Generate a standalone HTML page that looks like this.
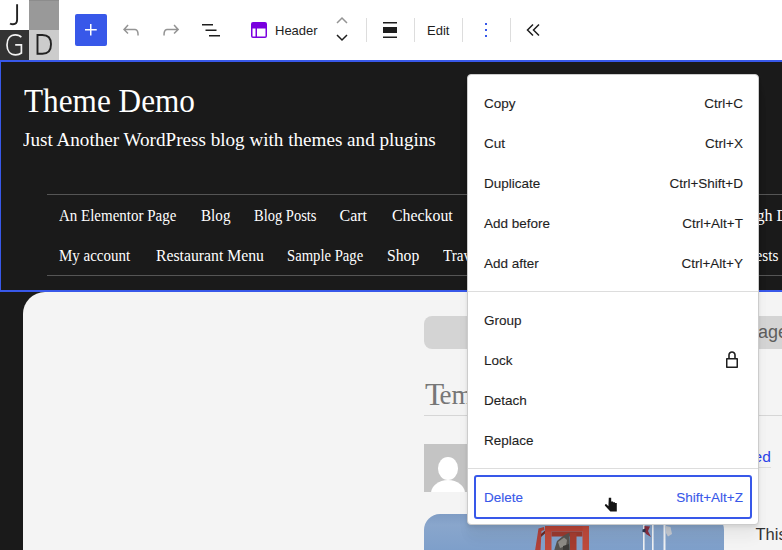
<!DOCTYPE html>
<html><head><meta charset="utf-8">
<style>
*{margin:0;padding:0;box-sizing:border-box}
html,body{width:782px;height:550px;overflow:hidden;background:#fff;position:relative;font-family:"Liberation Sans",sans-serif}
.a{position:absolute}
svg{position:absolute;display:block}
.tb{left:0;top:0;width:782px;height:60px;background:#fff}
.sep{position:absolute;top:18px;width:1px;height:24px;background:#ddd}
.ui{position:absolute;font-size:13px;color:#1e1e1e;white-space:nowrap;line-height:1}
.hdr{left:0;top:60px;width:782px;height:232px;background:#1a1a1a;border-top:2px solid #3858e9;border-bottom:2px solid #3858e9;border-left:1px solid #3858e9}
.serif{position:absolute;font-family:"Liberation Serif",serif;color:#fff;white-space:nowrap;line-height:1;transform-origin:0 0}
.nav{font-size:16px}
.card{left:23px;top:292px;width:800px;height:300px;background:#f4f4f4;border-top-left-radius:22px}
.menu{left:467px;top:74px;width:292px;height:451px;background:#fff;border:1px solid #ccc;border-radius:4px;box-shadow:0 2px 3px rgba(0,0,0,.05),0 4px 5px rgba(0,0,0,.04),0 12px 12px rgba(0,0,0,.03),0 16px 16px rgba(0,0,0,.02)}
.mi{position:absolute;font-size:13.5px;color:#1e1e1e;white-space:nowrap;line-height:1;-webkit-text-stroke:0.1px currentColor}
.sc{text-align:right}
</style></head><body>
<!-- toolbar -->
<div class="a tb"></div>
<div class="a" style="left:0;top:0;width:29px;height:30px;background:#fff"></div>
<div class="a" style="left:29px;top:0;width:30px;height:30px;background:#999;border-top:1px solid #8c8c8c"></div>
<div class="a" style="left:0;top:30px;width:29px;height:30px;background:#333"></div>
<div class="a" style="left:29px;top:30px;width:30px;height:30px;background:#ccc"></div>
<svg style="left:0;top:0" width="59" height="60" viewBox="0 0 59 60">
<path d="M17.1 4.2V19.8c0 2.9-1.6 4.5-4.1 4.5-1.1 0-2.1-.3-2.9-.9" stroke="#222" stroke-width="1.9" fill="none"/>
<path d="M21.3 37.3C20 35.6 18 34.8 15.4 34.8 10.2 34.8 7 38.9 7 44.9 7 51 10.4 54.8 15.6 54.8 18 54.8 19.9 54.2 21.4 53V44.9H15.2" stroke="#f2f2f2" stroke-width="1.7" fill="none"/>
<path d="M37.5 35V53.8H42.4C48.2 53.8 51 49.9 51 44.3 51 38.6 48.2 35 42.4 35Z" stroke="#222" stroke-width="1.9" fill="none"/>
</svg>

<div class="a" style="left:75px;top:14px;width:32px;height:32px;background:#3858e9;border-radius:2px"></div>
<svg style="left:75px;top:14px" width="32" height="32" viewBox="75 14 32 32"><path d="M90 24h1.5v4.95h5.25v1.5H91.5v5.05H90v-5.05h-5v-1.5h5z" fill="#fff"/></svg>
<svg style="left:119px;top:18px" width="24" height="24" viewBox="0 0 24 24"><path d="M18.3 11.7c-.6-.6-1.4-.9-2.3-.9H6.7l2.9-3.3-1.1-1-4.5 5L8.5 16l1-1-2.7-2.7H16c.5 0 .9.2 1.3.5 1 1 1 3.4 1 4.5v.3h1.5v-.2c0-1.5 0-4.3-1.5-5.7z" fill="#949494"/></svg>
<svg style="left:159px;top:18px" width="24" height="24" viewBox="0 0 24 24"><path d="M15.6 6.5l-1.1 1 2.9 3.3H8c-.9 0-1.7.3-2.3.9-1.4 1.5-1.4 4.2-1.4 5.6v.2h1.5v-.3c0-1.1 0-3.5 1-4.5.3-.3.7-.5 1.3-.5h9.2L14.5 15l1.1 1.1 4.6-4.6-4.6-5z" fill="#949494"/></svg>
<svg style="left:199px;top:18px" width="24" height="24" viewBox="0 0 24 24"><path d="M3 6h11v1.5H3V6Zm3.5 5.5h11V13h-11v-1.5ZM21 17H10v1.5h11V17Z" fill="#1e1e1e"/></svg>
<svg style="left:247px;top:18px" width="24" height="24" viewBox="0 0 24 24"><path d="M18.5 10.5H10v8h8a.5.5 0 00.5-.5v-7.5zm-10 0h-3V18a.5.5 0 00.5.5h2.5v-8zM6 4h12a2 2 0 012 2v12a2 2 0 01-2 2H6a2 2 0 01-2-2V6a2 2 0 012-2z" fill="#7a00df"/></svg>
<div class="ui" style="left:275px;top:24px">Header</div>
<svg style="left:330px;top:12px" width="24" height="16" viewBox="0 0 24 16"><path d="M7 11l5-5 5 5" fill="none" stroke="#949494" stroke-width="1.5"/></svg>
<svg style="left:330px;top:32px" width="24" height="16" viewBox="0 0 24 16"><path d="M7 3l5 5 5-5" fill="none" stroke="#1e1e1e" stroke-width="1.5"/></svg>
<div class="sep" style="left:366px"></div>
<svg style="left:378px;top:18px" width="24" height="24" viewBox="0 0 24 24"><path d="M5 4h14v1.5H5zM5 9h14v6H5zM5 18.5h14V20H5z" fill="#1e1e1e"/></svg>
<div class="sep" style="left:414px"></div>
<div class="ui" style="left:427px;top:24px">Edit</div>
<div class="sep" style="left:462px"></div>
<div class="a" style="left:485px;top:23px;width:2px;height:2px;background:#3858e9"></div>
<div class="a" style="left:485px;top:29px;width:2px;height:2px;background:#3858e9"></div>
<div class="a" style="left:485px;top:35px;width:2px;height:2px;background:#3858e9"></div>
<div class="sep" style="left:510px"></div>
<svg style="left:521px;top:18px" width="24" height="24" viewBox="0 0 24 24"><path d="M12 6.5L6.5 12l5.5 5.5M18 6.5L12.5 12l5.5 5.5" fill="none" stroke="#1e1e1e" stroke-width="1.5"/></svg>

<!-- header block -->
<div class="a" style="left:0;top:60px;width:782px;height:490px;background:#1a1a1a"></div>
<div class="a hdr"></div>
<div class="serif" style="left:24px;top:83.6px;font-size:34px;transform:scaleX(0.919)">Theme Demo</div>
<div class="serif" style="left:23px;top:130.3px;font-size:19px;transform:scaleX(1.006)">Just Another WordPress blog with themes and plugins</div>
<div class="a" style="left:47px;top:194px;width:740px;height:1px;background:#555"></div>
<div class="a" style="left:47px;top:275px;width:740px;height:1px;background:#555"></div>
<div class="serif nav" style="left:59px;top:207.8px;transform:scaleX(0.936)">An Elementor Page</div>
<div class="serif nav" style="left:200.5px;top:207.8px;transform:scaleX(0.947)">Blog</div>
<div class="serif nav" style="left:253.5px;top:207.8px;transform:scaleX(0.907)">Blog Posts</div>
<div class="serif nav" style="left:339.5px;top:207.8px">Cart</div>
<div class="serif nav" style="left:391.5px;top:207.8px;transform:scaleX(0.99)">Checkout</div>
<div class="serif nav" style="left:59px;top:247.8px;transform:scaleX(0.935)">My account</div>
<div class="serif nav" style="left:155.8px;top:247.8px;transform:scaleX(0.983)">Restaurant Menu</div>
<div class="serif nav" style="left:287px;top:247.8px;transform:scaleX(0.917)">Sample Page</div>
<div class="serif nav" style="left:386.8px;top:247.8px;transform:scaleX(0.98)">Shop</div>
<div class="serif nav" style="left:442.5px;top:247.8px;transform:scaleX(0.95)">Travel</div>
<div class="serif nav" style="left:756.5px;top:207.8px">gh Demand</div>
<div class="serif nav" style="left:737px;top:247.8px;transform:scaleX(0.95)">Guests</div>

<!-- content card -->
<div class="a card"></div>
<div class="a" style="left:424px;top:316px;width:420px;height:33px;background:#d4d4d4;border-radius:8px"></div>
<div class="ui" style="left:746px;top:322.8px;font-size:18px;color:#5e5e5e">Page</div>
<div class="serif" style="left:425px;top:378.8px;font-size:31.5px;color:#777">T</div><div class="serif" style="left:439.6px;top:382.2px;font-size:27px;color:#777">emplate</div>
<div class="a" style="left:424px;top:415px;width:400px;height:1px;background:#d6d6d6"></div>
<div class="a" style="left:424px;top:444px;width:48px;height:48px;background:#c4c4c4;overflow:hidden">
 <div class="a" style="left:14px;top:13px;width:20px;height:22.5px;border-radius:50%;background:#fff"></div>
 <div class="a" style="left:7px;top:35.5px;width:34px;height:30px;border-radius:50% 50% 0 0/45% 45% 0 0;background:#fff"></div>
</div>
<div class="ui" style="left:745px;top:448.5px;font-size:15.5px;color:#2b43e8">ned</div>
<div class="a" style="left:740px;top:467px;width:31px;height:1px;background:#ddd"></div>
<div class="a" style="left:424px;top:514px;width:300px;height:40px;border-top-left-radius:16px;border-top-right-radius:16px;overflow:hidden;background:linear-gradient(180deg,#7f9cc4 0px,#89a6cc 11px,#7e9fca 36px,#7c9ec9 40px)">
<svg style="left:0;top:0" width="300" height="40" viewBox="0 0 300 40">
<g transform="translate(-424,-514)">
<path d="M535 551 L538.5 528.5 L544 527 L544.5 530 L541.5 531 L540.5 551z" fill="#b0423a"/>
<path d="M541 534 L545 530.5 L545 533.5 L541 537z" fill="#6e2a24"/>
<rect x="545" y="526" width="6.5" height="30" fill="#bd4a3c"/>
<rect x="545" y="526" width="44" height="5.5" fill="#b94538"/>
<rect x="551.5" y="531.5" width="31" height="5" fill="#9a3a2f"/>
<rect x="570" y="533" width="6.5" height="20" fill="#a53d31"/>
<rect x="582.5" y="526" width="6.5" height="30" fill="#bd4a3c"/>
<path d="M554 551 L557 541 L563 536 L569.5 532.5 L570 551z" fill="#55534f"/>
<path d="M558 542 L564 537.5 L567 540 L566 546 L560 548z" fill="#8e8c86"/>
<path d="M563 546 L569 544 L569 551 L563 551z" fill="#3c3b38"/>
<rect x="643" y="524" width="1.6" height="30" fill="#eef0f3"/>
<rect x="652" y="524" width="1.6" height="30" fill="#eef0f3"/>
<rect x="663.5" y="524" width="2" height="30" fill="#eef0f3"/>
<path d="M644.5 526 L650 526.5 L648 531 L651 537 L646 534 L644.5 531z" fill="#8b2e3e"/>
<path d="M642.5 529.5 L645.5 528.5 L645.5 532.5 L642.5 532z" fill="#2c3550"/>
<path d="M666 526 L670.5 527 L672 534 L668 536.5 L666 533z" fill="#c4c9d1"/>
</g>
</svg>
</div>
<div class="ui" style="left:755.5px;top:525.8px;font-size:16.5px;color:#333">This</div>

<!-- menu -->
<div class="a menu"></div>
<div class="mi" style="left:484px;top:96.8px">Copy</div><div class="mi sc" style="left:600px;width:143px;top:96.8px">Ctrl+C</div>
<div class="mi" style="left:484px;top:136.8px">Cut</div><div class="mi sc" style="left:600px;width:143px;top:136.8px">Ctrl+X</div>
<div class="mi" style="left:484px;top:176.8px">Duplicate</div><div class="mi sc" style="left:600px;width:143px;top:176.8px">Ctrl+Shift+D</div>
<div class="mi" style="left:484px;top:216.8px">Add before</div><div class="mi sc" style="left:600px;width:143px;top:216.8px">Ctrl+Alt+T</div>
<div class="mi" style="left:484px;top:256.8px">Add after</div><div class="mi sc" style="left:600px;width:143px;top:256.8px">Ctrl+Alt+Y</div>
<div class="a" style="left:468px;top:291px;width:290px;height:1px;background:#ddd"></div>
<div class="mi" style="left:484px;top:313.8px">Group</div>
<div class="mi" style="left:484px;top:353.8px">Lock</div>
<div class="mi" style="left:484px;top:393.8px">Detach</div>
<div class="mi" style="left:484px;top:433.8px">Replace</div>
<svg style="left:720px;top:348px" width="24" height="24" viewBox="0 0 24 24"><path d="M17 10h-1.2V7c0-2.1-1.7-3.8-3.8-3.8-2.1 0-3.8 1.7-3.8 3.8v3H7c-.6 0-1 .4-1 1v8c0 .6.4 1 1 1h10c.6 0 1-.4 1-1v-8c0-.6-.4-1-1-1zM9.8 7c0-1.2 1-2.2 2.2-2.2 1.2 0 2.2 1 2.2 2.2v3H9.8V7zm6.7 11.5h-9v-7h9v7z" fill="#1e1e1e"/></svg>
<div class="a" style="left:468px;top:468px;width:290px;height:1px;background:#ddd"></div>
<div class="a" style="left:474px;top:475px;width:278px;height:44px;border:2px solid #3858e9;border-radius:3px"></div>
<div class="mi" style="left:484px;top:490.8px;color:#3858e9">Delete</div><div class="mi sc" style="left:600px;width:143px;top:490.8px;color:#3858e9">Shift+Alt+Z</div>
<svg style="left:600px;top:492px" width="22" height="22" viewBox="600 492 22 22"><path d="M608.8 497.8h2.4v3.6h1.9v0.8h1.9v0.8h1.8v8.6h-6.4l-5.6-6.1 0.4-1.2h1.3l1.9 1.9z" fill="#141414"/></svg>
</body></html>
